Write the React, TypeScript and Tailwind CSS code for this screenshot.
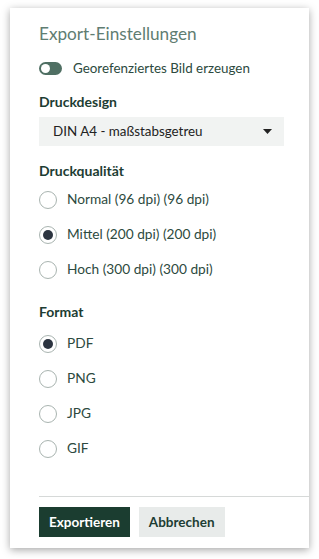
function Radio({ label, checked }: { label: string; checked?: boolean }) {
  return (
    <div className="flex items-center h-[35px]">
      <span className="flex h-[18px] w-[18px] items-center justify-center rounded-full border border-[#a9b4b0] bg-white">
        {checked && <span className="h-[10px] w-[10px] rounded-full bg-[#2c3440]" />}
      </span>
      <span className="ml-[10px] text-[13.7px] text-[#2d4a40]">{label}</span>
    </div>
  );
}

export default function App() {
  return (
    <div className="min-h-screen bg-white pt-[8px] pl-[10px]" style={{ fontFamily: 'Lato, "Noto Sans", sans-serif' }}>
      <div className="w-[299px] h-[540px] bg-white shadow-[0_2px_8px_rgba(0,0,0,0.35)] pl-[29px] flex flex-col">
        {/* Header */}
        <h1 className="mt-[15px] text-[17.2px] leading-[22px] text-[#5f7d72]">Export-Einstellungen</h1>

        <div className="mt-[14px] flex items-center h-[18px]">
          <span className="flex h-[13px] w-[23px] items-center rounded-full bg-[#4f6f63] pl-[2px]">
            <span className="h-[9px] w-[9px] rounded-full bg-white" />
          </span>
          <span className="ml-[11px] text-[13.4px] text-[#2d4a40]">Georefenziertes Bild erzeugen</span>
        </div>

        {/* Druckdesign */}
        <p className="mt-[14px] text-[14px] font-bold text-[#1d3d33]">Druckdesign</p>
        <div className="mt-[5px] flex h-[29px] w-[245px] items-center justify-between bg-[#f1f3f2] pl-[14px] pr-[12px]">
          <span className="text-[13.4px] text-[#222]">DIN A4 - maßstabsgetreu</span>
          <svg width="9" height="5" viewBox="0 0 9 5">
            <path d="M0 0h9L4.5 5z" fill="#222" />
          </svg>
        </div>

        {/* Druckqualität */}
        <p className="mt-[14px] text-[14px] font-bold text-[#1d3d33]">Druckqualität</p>
        <div className="mt-[1px]">
          <Radio label="Normal (96 dpi) (96 dpi)" />
          <Radio label="Mittel (200 dpi) (200 dpi)" checked />
          <Radio label="Hoch (300 dpi) (300 dpi)" />
        </div>

        {/* Format */}
        <p className="mt-[14px] text-[14px] font-bold text-[#1d3d33]">Format</p>
        <div className="mt-[4px]">
          <Radio label="PDF" checked />
          <Radio label="PNG" />
          <Radio label="JPG" />
          <Radio label="GIF" />
        </div>

        <div className="mt-auto border-t border-[#d6d9d8] pt-[10px] pb-[11px] flex gap-[9px]">
          <button className="h-[30px] px-[10px] bg-[#1b3d30] text-white text-[13.5px] font-bold">Exportieren</button>
          <button className="h-[30px] px-[10px] bg-[#e8ebea] text-[#1d3d33] text-[13.5px] font-bold">Abbrechen</button>
        </div>
      </div>
    </div>
  );
}
